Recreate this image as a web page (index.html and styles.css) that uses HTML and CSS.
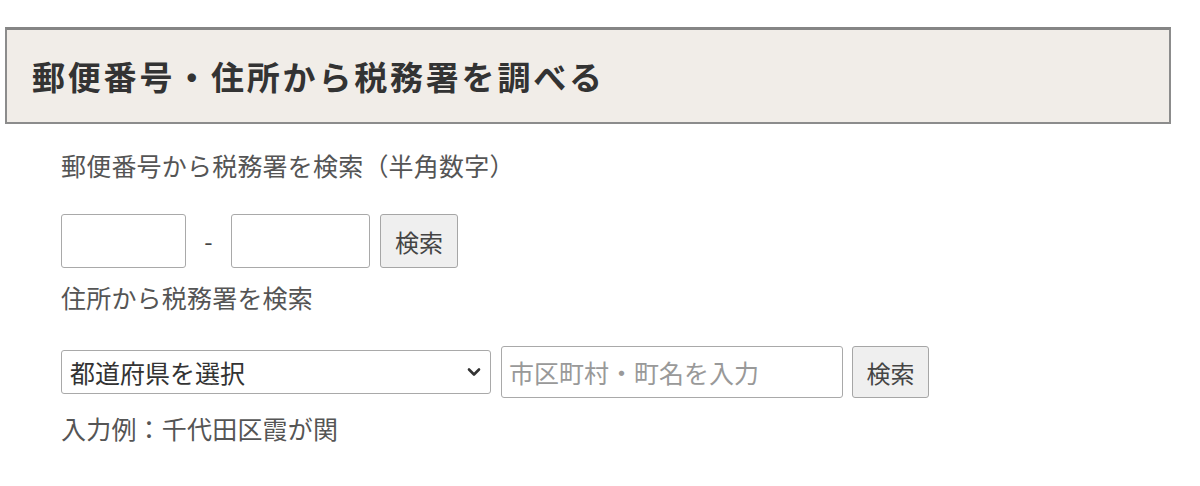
FILE: index.html
```html
<!DOCTYPE html>
<html lang="ja">
<head>
<meta charset="utf-8">
<link rel="stylesheet" href="styles.css">
</head>
<body>
<section class="panel">
  <h2 class="panel-title">郵便番号・住所から税務署を調べる</h2>
  <div class="panel-body">
    <p class="label label-first">郵便番号から税務署を検索（半角数字）</p>
    <div class="row row-zip">
      <input class="field zip1" type="text">
      <span class="dash">-</span>
      <input class="field zip2" type="text">
      <button class="btn">検索</button>
    </div>
    <p class="label">住所から税務署を検索</p>
    <div class="row row-addr">
      <div class="select-wrap">
        <select class="select">
          <option>都道府県を選択</option>
        </select>
        <svg class="chevron" width="14" height="10" viewBox="0 0 14 10"><path d="M2 2.5 L7 7.5 L12 2.5" fill="none" stroke="#333" stroke-width="2.6" stroke-linecap="round" stroke-linejoin="round"/></svg>
      </div>
      <input class="field city" type="text" placeholder="市区町村・町名を入力">
      <button class="btn btn-addr">検索</button>
    </div>
    <p class="label note">入力例：千代田区霞が関</p>
  </div>
</section>
</body>
</html>
```
FILE: styles.css
```css
html, body {
  margin: 0;
  padding: 0;
  background: #ffffff;
}
body {
  font-family: "Noto Sans CJK JP", "Noto Sans", sans-serif;
  color: #555555;
}
.panel {
  padding-top: 27px;
}
.panel-title {
  margin: 0 0 0 5px;
  background: #f1ede8;
  border: 2px solid #8c8c8c;
  border-top: 3px solid #858585;
  display: flex;
  align-items: center;
  padding: 0 0 0 25px;
  box-sizing: border-box;
  height: 97px;
  width: 1166px;
  font-size: 33px;
  font-weight: bold;
  letter-spacing: 2.8px;
  color: #333333;
  line-height: 1;
}
.panel-body {
  padding-left: 61px;
  display: flex;
  flex-direction: column;
  align-items: flex-start;
}
.label {
  margin: 11px 0 0;
  font-size: 25px;
  line-height: 36px;
  color: #555555;
  letter-spacing: 0.2px;
}
.label-first {
  margin-top: 23px;
}
.row {
  display: flex;
  align-items: center;
}
.row-zip {
  margin-top: 31px;
  height: 54px;
}
.row-addr {
  margin-top: 31px;
  height: 52px;
}
.note {
  margin-top: 12px;
}
.field {
  box-sizing: border-box;
  border: 1.5px solid #a9a9a9;
  border-radius: 3px;
  background: #fff;
  font-family: inherit;
  font-size: 25px;
  color: #333;
  margin: 0;
  padding: 0 7px;
  outline: none;
}
.zip1 {
  width: 125px;
  height: 54px;
}
.zip2 {
  width: 139px;
  height: 54px;
}
.dash {
  width: 45px;
  text-align: center;
  font-size: 24px;
  line-height: 1;
  color: #444;
}
.btn {
  box-sizing: border-box;
  margin: 0 0 0 10px;
  width: 78px;
  height: 54px;
  border: 1.5px solid #a6a6a6;
  border-radius: 3px;
  background: #efefef;
  font-family: inherit;
  font-size: 24px;
  color: #444;
  padding: 0;
}
.btn-addr {
  width: 77px;
  height: 52px;
  margin-left: 9px;
}
.select-wrap {
  position: relative;
  width: 430px;
  height: 44px;
}
.select {
  appearance: none;
  -webkit-appearance: none;
  box-sizing: border-box;
  width: 430px;
  height: 44px;
  border: 1.5px solid #a9a9a9;
  border-radius: 3px;
  background: #fff;
  font-family: inherit;
  font-size: 25px;
  color: #333;
  padding: 0 30px 0 8px;
  margin: 0;
  outline: none;
}
.chevron {
  position: absolute;
  right: 10px;
  top: 17px;
  pointer-events: none;
}
.city {
  margin-left: 10px;
  width: 342px;
  height: 52px;
}
.city::placeholder {
  color: #999;
}
```
